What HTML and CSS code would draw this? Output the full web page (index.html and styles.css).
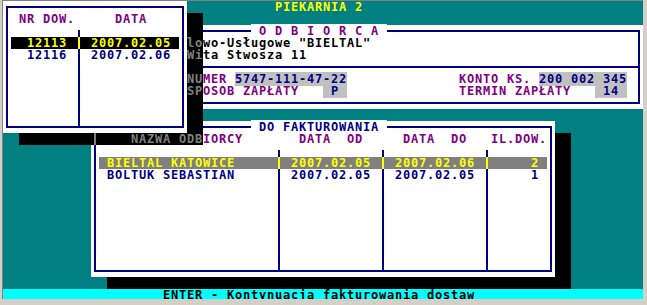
FILE: index.html
```html
<!DOCTYPE html>
<html lang="pl">
<head>
  <meta charset="UTF-8" />
  <title>Piekarnia 2 - fakturowanie dostaw</title>
  <link rel="stylesheet" href="styles.css">
</head>
<body>
  <div class="win">
    <div class="screen">
      <div class="topbar">PIEKARNIA 2</div>

      <!-- lista dowodow (okno na wierzchu) -->
      <div class="box docs">
        <div class="frame"></div>
        <div class="vline docs-split"></div>
        <div class="row"></div>
        <div class="row purple">  NR DOW.     DATA</div>
        <div class="row"></div>
        <div class="row pick dark">  12113 <span class="vl"></span> 2007.02.05 </div>
        <div class="row blue">   12116   2007.02.06</div>
      </div>

      <!-- dane odbiorcy, dwie pierwsze kolumny w cieniu okna dowodow -->
      <div class="box odb">
        <div class="frame"></div>
        <div class="row">        <span class="caption purple"> O D B I O R C A </span></div>
        <div class="row"><span class="sh">lo</span>wo-Usługowe "BIELTAL"</div>
        <div class="row"><span class="sh">Wi</span>ta Stwosza 11</div>
        <div class="sep"></div>
        <div class="row"><span class="sh">NU</span><span class="purple">MER</span> <span class="val">5747-111-47-22</span>              <span class="purple">KONTO KS.</span> <span class="val">200 002 345</span></div>
        <div class="row"><span class="sh">SP</span><span class="purple">OSOB ZAPŁATY</span>   <span class="val"> P </span>              <span class="purple">TERMIN ZAPŁATY</span>   <span class="val"> 14 </span></div>
      </div>

      <!-- do fakturowania -->
      <div class="box fakt">
        <div class="frame"></div>
        <div class="vline col-a"></div>
        <div class="vline col-b"></div>
        <div class="vline col-c"></div>
        <div class="row">                    <span class="caption blue"> DO FAKTUROWANIA </span></div>
        <div class="row"><span class="sh">     NAZWA ODB</span><span class="purple">IORCY       DATA  OD     DATA  DO   IL.DOW.</span></div>
        <div class="row"></div>
        <div class="row pick gray"> BIELTAL KATOWICE     <span class="vl"></span> 2007.02.05 <span class="vl"></span> 2007.02.06 <span class="vl"></span>     2 </div>
        <div class="row blue">  BOLTUK SEBASTIAN       2007.02.05   2007.02.05       1</div>
      </div>

      <div class="shadow shadow-docs-top"></div>
      <div class="shadow shadow-docs-r"></div>
      <div class="shadow shadow-docs-b"></div>
      <div class="shadow shadow-fakt-r"></div>
      <div class="shadow shadow-fakt-b"></div>

      <div class="status">ENTER - Kontynuacja fakturowania dostaw</div>
    </div>
  </div>
</body>
</html>
```

FILE: styles.css
```css
body {
  margin: 0;
  background: #d4d0c8;
}

.win {
  width: 645px;
  height: 299px;
  overflow: hidden;
}

/* 80x25 text screen, 8x12 cells */
.screen {
  position: relative;
  width: 640px;
  height: 300px;
  margin-left: 2px;
  border-left: 1px solid #808080;
  border-top: 1px solid #808080;
  background: #008080;
  display: flex;
  flex-direction: column;
  justify-content: space-between;
  font-family: "DejaVu Sans Mono", monospace;
  font-weight: bold;
  font-size: 12px;
  letter-spacing: 0.775px;
  line-height: 12px;
  color: #000;
}

.topbar,
.status,
.row {
  height: 12px;
  white-space: pre;
}

.topbar {
  padding-left: 272px;
  color: #ffff00;
}

.status {
  padding-left: 160px;
  background: #00ffff;
  color: #000;
}

.box {
  position: absolute;
  background: #fff;
}

.docs {
  left: 0;
  top: 0;
  width: 184px;
  height: 132px;
  z-index: 3;
}

.odb {
  left: 184px;
  top: 24px;
  width: 456px;
  height: 84px;
  background: linear-gradient(#000, #000) 0 0 / 16px 100% no-repeat, #fff;
}

.fakt {
  left: 88px;
  top: 120px;
  width: 464px;
  height: 156px;
}

.frame {
  position: absolute;
  top: 5px;
  right: 3px;
  bottom: 5px;
  left: 3px;
  border: 2px solid #000080;
}

.odb .frame {
  left: 16px;
  border-left: 0;
}

.vline {
  position: absolute;
  top: 29px;
  bottom: 5px;
  width: 2px;
  background: #000080;
}

.docs-split { left: 75px; }
.col-a { left: 187px; }
.col-b { left: 291px; }
.col-c { left: 395px; }

.caption {
  position: relative;
  background: #fff;
}

.sep {
  height: 12px;
  background: linear-gradient(#000080, #000080) 16px 5px / calc(100% - 19px) 2px no-repeat;
}

.purple { color: #800080; }
.blue { color: #000080; }

.val {
  background: #c0c0c0;
  color: #000080;
}

.pick {
  width: max-content;
  margin-left: 8px;
  color: #ffff00;
}

.pick.dark { background: #000; }
.pick.gray { background: #808080; }

.vl {
  position: relative;
  display: inline-block;
  width: 8px;
  height: 12px;
  vertical-align: top;
  background: linear-gradient(#ffff00, #ffff00) 3px 0 / 2px 100% no-repeat;
}

/* cells under a window shadow */
.shadow {
  position: absolute;
  background: #000;
  z-index: 1;
}

.sh {
  position: relative;
  z-index: 2;
  color: #808080;
}

.shadow-docs-top {
  left: 184px;
  top: 12px;
  width: 16px;
  height: 12px;
}

.shadow-docs-r {
  left: 184px;
  top: 108px;
  width: 16px;
  height: 24px;
}

.shadow-docs-b {
  left: 16px;
  top: 132px;
  width: 184px;
  height: 12px;
  background: linear-gradient(#808080, #808080) 75px 0 / 2px 100% no-repeat, #000;
}

.shadow-fakt-r {
  left: 552px;
  top: 132px;
  width: 16px;
  height: 144px;
}

.shadow-fakt-b {
  left: 104px;
  top: 276px;
  width: 464px;
  height: 12px;
}
```
